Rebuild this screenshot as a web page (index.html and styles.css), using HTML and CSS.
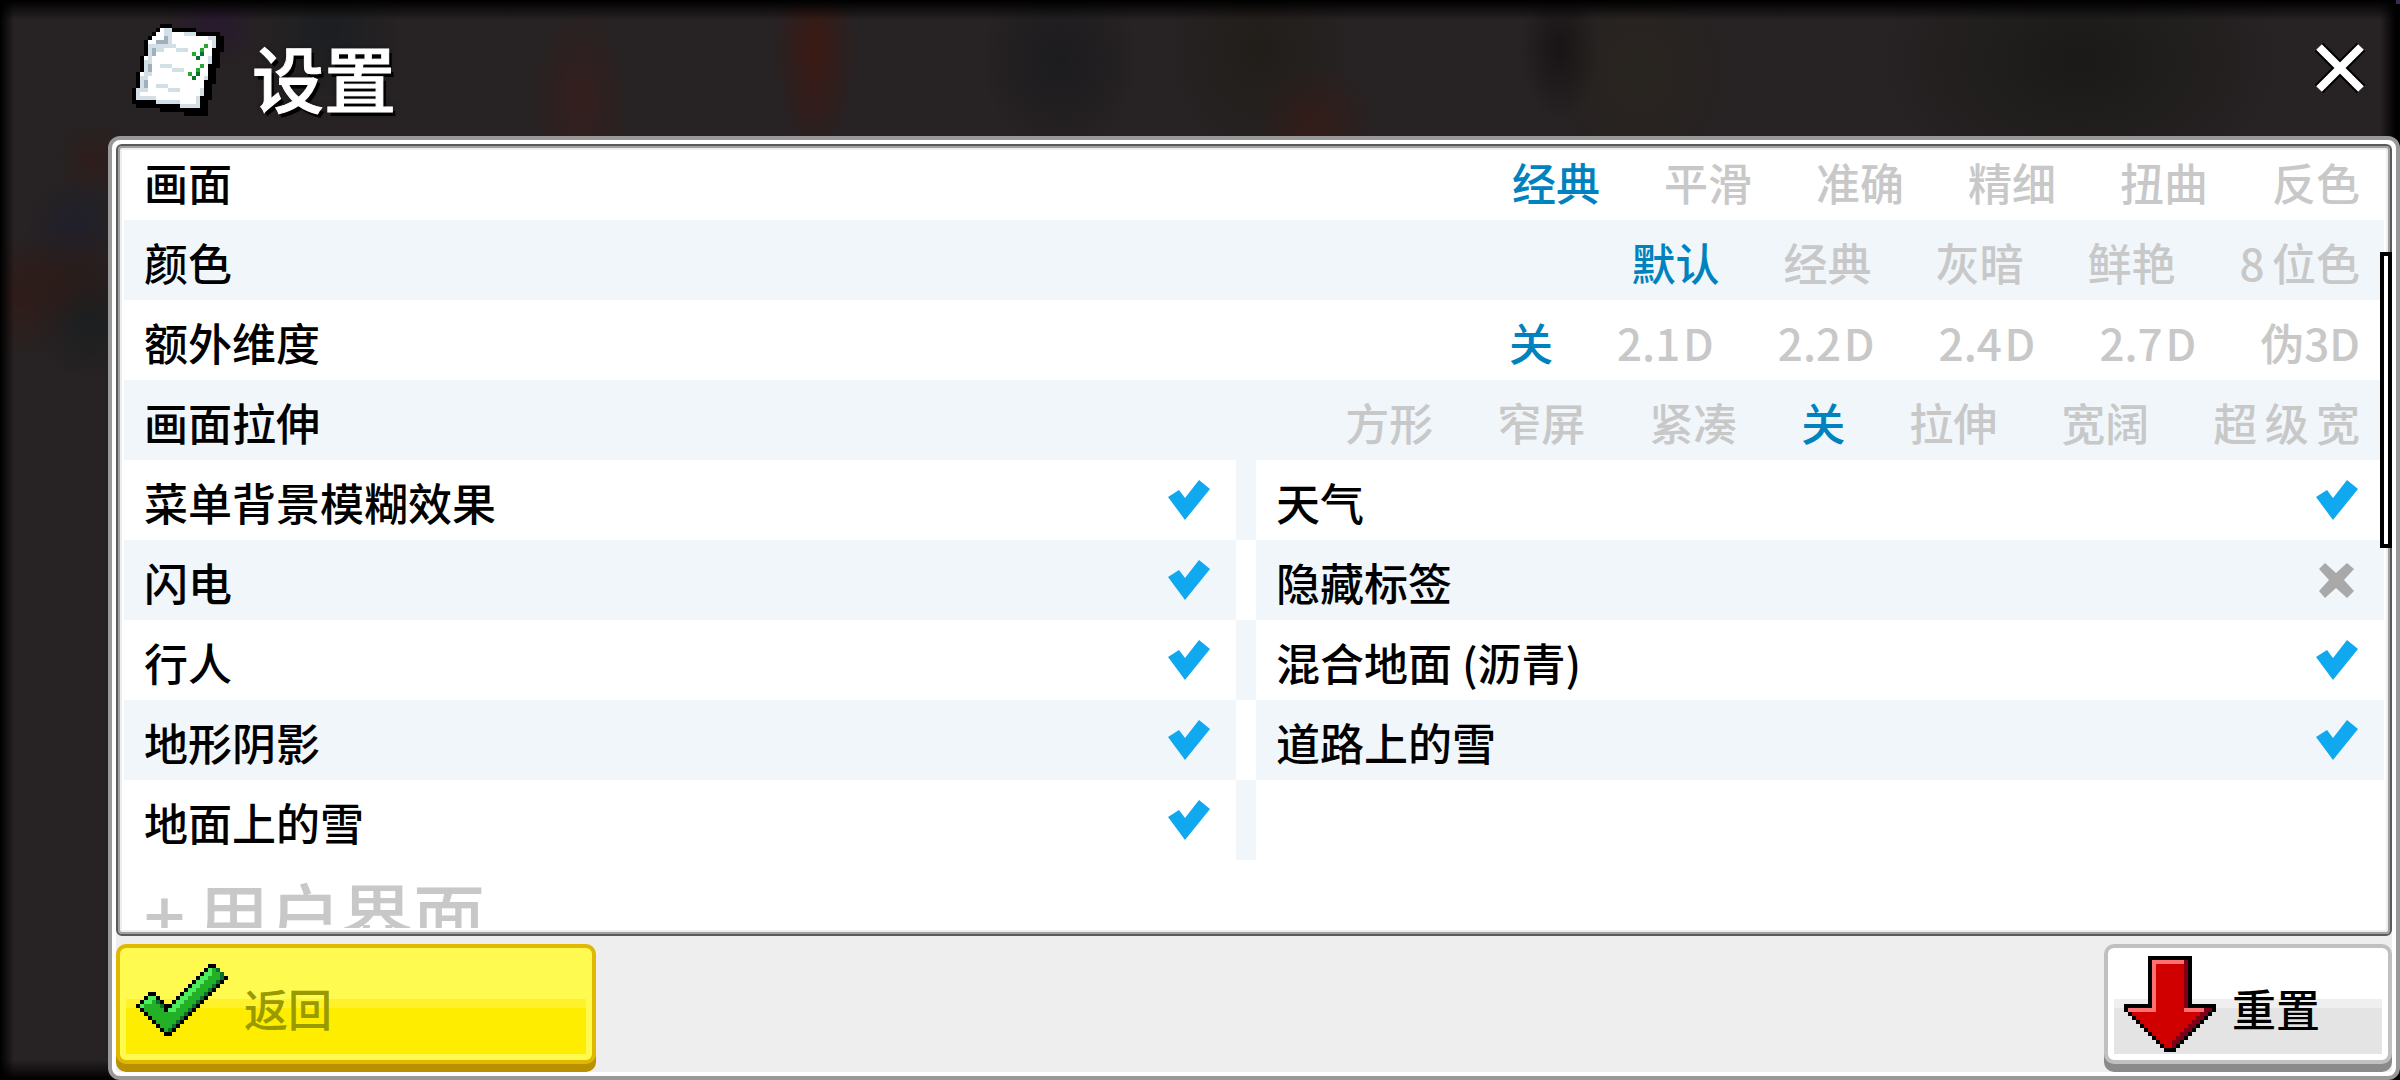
FILE: index.html
```html
<!DOCTYPE html>
<html lang="zh-CN">
<head>
    <meta charset="UTF-8">
    <meta name="viewport" content="width=device-width, initial-scale=1.0">
    <title>设置</title>
    <link rel="stylesheet" href="styles.css">
</head>
<body>
    <header class="header">
        <svg class="header-icon" viewBox="0 0 23 23" shape-rendering="crispEdges" aria-hidden="true">
            <path fill="#000" d="M7 0H10V1H16V2H22V3H23V7H22V11H21V15H20V19H19V23H13V22H7V21H1V20H0V16H1V12H2V8H3V4H4V3H5V2H6V1H7z"/>
            <path fill="#fff" d="M7 1H10V2H16V3H21V6H20V10H19V14H18V18H17V21H12V20H6V19H1V16H2V12H3V8H4V4H5V3H6V2H7z"/>
            <path fill="#d3dfe7" d="M8 1h1v3h-1zM9 1h1v4h-1zM13 2h3v1h-3zM19 3h2v1h-2zM20 3h1v3h-1zM4 5h7v1h-3v1h-4zM11 6h3v1h-3zM4 6h1v3h-1zM3 9h2v4h-2zM7 10h3v1h-3zM10 11h3v1h-3zM2 13h2v4h-2zM6 15h3v1h-3zM9 16h3v1h-3zM1 16h1v2h-1zM1 18h5v1h-5zM6 19h6v1h-6zM12 20h5v1h-5zM17 16h1v2h-1zM16 18h1v2h-1zM18 13h1v1h-1zM19 8h1v2h-1z"/>
            <path fill="#9fb0ba" d="M8 3h1v2h-3v-1h2zM5 6h1v2h-1zM4 10h1v2h-1zM3 14h1v2h-1z"/>
            <path fill="#25a830" d="M18 5h1v1h-1zM17 6h1v1h-1zM15 7h1v1h-1zM17 10h1v1h-1zM16 11h1v1h-1zM14 12h1v1h-1z"/>
            <path fill="#0a7128" d="M17 7h1v1h-1zM16 8h1v1h-1zM16 12h1v1h-1zM15 13h1v1h-1z"/>
        </svg>
        <h1 class="title">设置</h1>
        <button class="close" type="button" aria-label="关闭">
            <svg viewBox="0 0 52 52" width="52" height="52" aria-hidden="true">
                <path d="M5 5L47 47M47 5L5 47" stroke="#000" stroke-width="12"/>
                <path d="M5 5L47 47M47 5L5 47" stroke="#fff" stroke-width="8"/>
            </svg>
        </button>
    </header>

    <main class="panel">
        <div class="frame">
            <div class="scroll">
                <div class="list">
                    <div class="row" role="radiogroup" aria-label="画面">
                        <span class="label">画面</span>
                        <div class="options">
                            <label class="option"><input type="radio" name="graphics" checked><span>经典</span></label>
                            <label class="option"><input type="radio" name="graphics"><span>平滑</span></label>
                            <label class="option"><input type="radio" name="graphics"><span>准确</span></label>
                            <label class="option"><input type="radio" name="graphics"><span>精细</span></label>
                            <label class="option"><input type="radio" name="graphics"><span>扭曲</span></label>
                            <label class="option"><input type="radio" name="graphics"><span>反色</span></label>
                        </div>
                    </div>
                    <div class="row" role="radiogroup" aria-label="颜色">
                        <span class="label">颜色</span>
                        <div class="options">
                            <label class="option"><input type="radio" name="color" checked><span>默认</span></label>
                            <label class="option"><input type="radio" name="color"><span>经典</span></label>
                            <label class="option"><input type="radio" name="color"><span>灰暗</span></label>
                            <label class="option"><input type="radio" name="color"><span>鲜艳</span></label>
                            <label class="option"><input type="radio" name="color"><span>8&#8198;位色</span></label>
                        </div>
                    </div>
                    <div class="row" role="radiogroup" aria-label="额外维度">
                        <span class="label">额外维度</span>
                        <div class="options">
                            <label class="option"><input type="radio" name="dimension" checked><span>关</span></label>
                            <label class="option"><input type="radio" name="dimension"><span>2.1&#8202;D</span></label>
                            <label class="option"><input type="radio" name="dimension"><span>2.2&#8202;D</span></label>
                            <label class="option"><input type="radio" name="dimension"><span>2.4&#8202;D</span></label>
                            <label class="option"><input type="radio" name="dimension"><span>2.7&#8202;D</span></label>
                            <label class="option"><input type="radio" name="dimension"><span>伪3D</span></label>
                        </div>
                    </div>
                    <div class="row" role="radiogroup" aria-label="画面拉伸">
                        <span class="label">画面拉伸</span>
                        <div class="options">
                            <label class="option"><input type="radio" name="stretch"><span>方形</span></label>
                            <label class="option"><input type="radio" name="stretch"><span>窄屏</span></label>
                            <label class="option"><input type="radio" name="stretch"><span>紧凑</span></label>
                            <label class="option"><input type="radio" name="stretch" checked><span>关</span></label>
                            <label class="option"><input type="radio" name="stretch"><span>拉伸</span></label>
                            <label class="option"><input type="radio" name="stretch"><span>宽阔</span></label>
                            <label class="option"><input type="radio" name="stretch"><span>超&#8198;级&#8198;宽</span></label>
                        </div>
                    </div>
                    <div class="pair">
                        <label class="toggle"><span>菜单背景模糊效果</span><input type="checkbox" checked></label>
                        <label class="toggle"><span>天气</span><input type="checkbox" checked></label>
                    </div>
                    <div class="pair">
                        <label class="toggle"><span>闪电</span><input type="checkbox" checked></label>
                        <label class="toggle"><span>隐藏标签</span><input type="checkbox"></label>
                    </div>
                    <div class="pair">
                        <label class="toggle"><span>行人</span><input type="checkbox" checked></label>
                        <label class="toggle"><span>混合地面 (沥青)</span><input type="checkbox" checked></label>
                    </div>
                    <div class="pair">
                        <label class="toggle"><span>地形阴影</span><input type="checkbox" checked></label>
                        <label class="toggle"><span>道路上的雪</span><input type="checkbox" checked></label>
                    </div>
                    <div class="pair">
                        <label class="toggle"><span>地面上的雪</span><input type="checkbox" checked></label>
                        <div class="toggle"></div>
                    </div>
                    <h2 class="section">+&#8198;用户界面</h2>
                </div>
            </div>
            <div class="scrollbar"></div>
        </div>

        <footer class="footer">
            <button class="btn btn-back" type="button">
                <svg width="92" height="72" viewBox="1 1 23 18" shape-rendering="crispEdges" aria-hidden="true">
                    <path fill="#000" d="M19 1h2v1h1v1h1v1h1v1h-1v1h-1v1h-1v1h-1v1h-1v1h-1v1h-1v1h-1v1h-1v1h-1v1h-1v1h-1v1h-1v1h-1v1h-2v-1h-1v-1h-1v-1h-1v-1h-1v-1h-1v-1h-1v-1h-1v-1h1v-1h1v-1h1v-1h2v1h1v1h1v1h2v-1h1v-1h1v-1h1v-1h1v-1h1v-1h1v-1h1v-1h1v-1h1z"/>
                    <path fill="#23b026" d="M19 2h2v1h1v1h1v1h-1v1h-1v1h-1v1h-1v1h-1v1h-1v1h-1v1h-1v1h-1v1h-1v1h-1v1h-1v1h-1v1h-2v-1h-1v-1h-1v-1h-1v-1h-1v-1h-1v-1h-1v-1h1v-1h1v-1h2v1h1v1h1v2h2v-1h1v-1h1v-1h1v-1h1v-1h1v-1h1v-1h1v-1h1v-1h1z"/>
                    <path fill="#4df05c" d="M19 2h1v2h-1v1h-1v1h-1v1h-1v1h-1v1h-1v1h-1v1h-1v1h-1v1h-1v-2h1v-1h1v-1h1v-1h1v-1h1v-1h1v-1h1v-1h1v-1h1zM9 12h1v1h-1zM4 9h2v1h-1v1h-2v1h-1v-1h1v-1h1z"/>
                    <path fill="#08702a" d="M20 2h1v1h1v1h1v1h-1v1h-1v1h-1v1h-1v1h-1v1h-1v1h-1v1h-1v1h-1v1h-1v1h-1v1h-1v1h-1v1h-1v-1h1v-1h1v-1h1v-1h1v-1h1v-1h1v-1h1v-1h1v-1h1v-1h1v-1h1v-1h1v-1h1v-1h1v-1h-1v-1h-1zM6 10h1v1h-1zM7 11h1v1h-1z"/>
                </svg>
                <span>返回</span>
            </button>
            <button class="btn btn-reset" type="button">
                <svg width="92" height="96" viewBox="0 0 23 24" shape-rendering="crispEdges" aria-hidden="true">
                    <path fill="#000" d="M6 0h11v12h6v2h-1v1h-1v1h-1v1h-1v1h-1v1h-1v1h-1v1h-1v1h-1v1h-1v1h-3v-1h-1v-1h-1v-1h-1v-1h-1v-1h-1v-1h-1v-1h-1v-1h-1v-1h-1v-1h-1v-2h6z"/>
                    <path fill="#d00000" d="M7 1h9v12h6v1h-1v1h-1v1h-1v1h-1v1h-1v1h-1v1h-1v1h-1v1h-1v1h-3v-1h-1v-1h-1v-1h-1v-1h-1v-1h-1v-1h-1v-1h-1v-1h-1v-1h6z"/>
                    <path fill="#ff7070" d="M7 1h8v1h-7v12h-7v-1h6zM15 13h6v1h-6z"/>
                    <path fill="#800018" d="M15 1h1v12h-1zM21 13h1v1h-1v1h-1v1h-1v1h-1v1h-1v1h-1v1h-1v1h-1v1h-1v1h-1v-2h1v-1h1v-1h1v-1h1v-1h1v-1h1v-1h1v-1h1v-1h1z"/>
                </svg>
                <span>重置</span>
            </button>
        </footer>
    </main>
</body>
</html>
```
FILE: styles.css
```css
* {
    box-sizing: border-box;
}

body {
    margin: 0;
    height: 100vh;
    display: flex;
    flex-direction: column;
    overflow: hidden;
    font-family: "Noto Sans CJK SC", sans-serif;
    font-size: 44px;
    font-weight: 500;
    line-height: 60px;
    color: #000;
    background:
        linear-gradient(#3b2b52, #3b2b52) right top / 4px 4px no-repeat,
        linear-gradient(90deg, #000, transparent 14px, transparent calc(100% - 20px), #000 calc(100% - 4px)),
        linear-gradient(#000, transparent 20px, transparent calc(100% - 20px), #000),
        radial-gradient(ellipse 40px 110px at 815px 50px, rgba(80, 16, 4, .5), transparent),
        radial-gradient(ellipse 50px 90px at 580px 100px, rgba(80, 24, 20, .35), transparent),
        radial-gradient(ellipse 50px 50px at 215px 20px, rgba(40, 16, 60, .5), transparent),
        radial-gradient(ellipse 70px 70px at 330px 30px, rgba(14, 26, 32, .5), transparent),
        radial-gradient(ellipse 60px 60px at 1315px 125px, rgba(70, 20, 10, .4), transparent),
        radial-gradient(ellipse 40px 70px at 1560px 50px, rgba(8, 6, 8, .5), transparent),
        radial-gradient(ellipse 80px 90px at 1060px 60px, rgba(16, 20, 26, .5), transparent),
        radial-gradient(ellipse 90px 110px at 1260px 50px, rgba(26, 26, 16, .5), transparent),
        radial-gradient(ellipse 90px 110px at 1640px 70px, rgba(42, 38, 28, .6), transparent),
        radial-gradient(ellipse 200px 140px at 2080px 60px, rgba(22, 22, 20, .7), transparent),
        radial-gradient(ellipse 80px 50px at 70px 275px, rgba(48, 20, 14, .4), transparent),
        radial-gradient(ellipse 60px 60px at 20px 300px, rgba(60, 20, 12, .4), transparent),
        radial-gradient(ellipse 50px 50px at 75px 225px, rgba(24, 28, 50, .5), transparent),
        radial-gradient(ellipse 40px 40px at 95px 160px, rgba(60, 20, 14, .35), transparent),
        radial-gradient(ellipse 60px 60px at 90px 320px, rgba(20, 28, 30, .6), transparent),
        #272223;
}

button {
    font: inherit;
    cursor: pointer;
}

.header {
    flex: none;
    height: 136px;
    padding: 0 34px 0 132px;
    display: flex;
    align-items: center;
}

.header-icon {
    width: 92px;
    height: 92px;
    margin-top: 4px;
}

.title {
    margin: 16px 0 0 28px;
    font-size: 72px;
    font-weight: 500;
    line-height: 88px;
    color: #fff;
    -webkit-text-stroke: 1px #fff;
    text-shadow: 3px 4px 0 #000, 0 0 6px rgba(0, 0, 0, .5);
}

.close {
    margin-left: auto;
    padding: 0;
    border: 0;
    background: none;
    display: flex;
}

/* window */
.panel {
    flex: 1;
    min-height: 0;
    margin-left: 108px;
    display: flex;
    flex-direction: column;
    border: 4px solid #999;
    border-radius: 12px;
    padding: 4px;
    background: linear-gradient(#eee, #eee) content-box, #fff;
}

.frame {
    position: relative;
    flex: 1;
    min-height: 0;
    padding: 2px 6px 6px;
    display: flex;
    border: 2px solid #5a5a5a;
    border-radius: 6px;
    background: #fff;
    box-shadow: inset 0 0 0 2px #a0a0a0, inset 0 0 0 4px #eee;
}

.scroll {
    flex: 1;
    overflow: hidden;
}

.list {
    margin-top: -8px;
}

.scrollbar {
    position: absolute;
    top: 106px;
    right: -2px;
    width: 12px;
    height: 296px;
    border: 4px solid #000;
    background: #fff;
}

/* rows */
.row,
.toggle {
    height: 80px;
    padding: 0 24px 0 20px;
    display: flex;
    align-items: center;
    justify-content: space-between;
}

.row:nth-child(even),
.pair:nth-child(even) .toggle,
.pair:nth-child(odd) {
    background: #f0f6fa;
}

.pair:nth-child(even),
.pair:nth-child(odd) .toggle {
    background: #fff;
}

.label,
.options,
.toggle span {
    padding-top: 4px;
}

.options {
    display: flex;
    gap: 64px;
}

.option {
    color: #c8c8c8;
    white-space: nowrap;
    cursor: pointer;
}

.option input {
    position: absolute;
    opacity: 0;
    margin: 0;
}

.option input:checked + span {
    color: #0082be;
}

.pair {
    display: grid;
    grid-template-columns: calc(50% - 18px) 1fr;
    column-gap: 20px;
}

.toggle input {
    appearance: none;
    width: 44px;
    height: 40px;
    margin: 0;
    background: #a9a9a9;
    clip-path: polygon(3px 9px, 9px 3px, 20px 13px, 31px 3px, 38px 9px, 28px 20px, 38px 31px, 31px 38px, 20px 28px, 9px 38px, 3px 31px, 13px 20px);
}

.toggle input:checked {
    background: #10a8ee;
    clip-path: polygon(0 17px, 11px 10px, 17px 18px, 31px 0, 42px 9px, 17px 40px);
}

.section {
    margin: 0;
    padding: 0 20px;
    font-size: 72px;
    font-weight: 500;
    line-height: 106px;
    color: #c8c8c8;
}

/* bottom buttons */
.footer {
    flex: none;
    padding: 8px 0;
    display: flex;
    justify-content: space-between;
}

.btn {
    height: 120px;
    padding: 0 16px;
    display: flex;
    align-items: center;
    gap: 16px;
    border: 4px solid;
    border-radius: 10px;
}

.btn span {
    padding-top: 8px;
}

.btn-back {
    width: 480px;
    color: #999900;
    border-color: #e0b800;
    box-shadow: 0 8px 0 #b89000;
    background:
        linear-gradient(#fff22b 9px, #ffed00 9px) 6px 51px / calc(100% - 12px) 55px no-repeat,
        #fffa50;
}

.btn-back svg {
    margin-bottom: 8px;
}

.btn-reset {
    width: 288px;
    color: #000;
    border-color: #c0c0c0;
    box-shadow: 0 8px 0 #8a8a8a;
    background:
        linear-gradient(#efefef 9px, #e4e4e4 9px) 6px 51px / calc(100% - 12px) 55px no-repeat,
        #fff;
}
```
